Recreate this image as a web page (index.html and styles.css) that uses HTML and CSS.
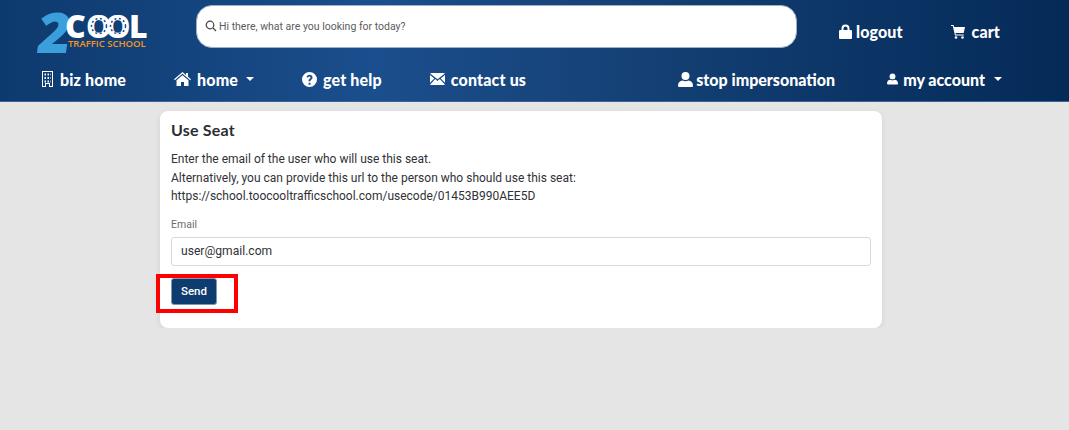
FILE: index.html
```html
<!DOCTYPE html>
<html lang="en">
<head>
    <meta charset="UTF-8">
    <meta name="viewport" content="width=device-width, initial-scale=1.0" />
    <title>Use Seat</title>
    <link rel="stylesheet" href="styles.css">
</head>
<body>
  <header class="header">
    <div class="top-row">
      <a class="logo" href="#">
        <svg width="110" height="42" viewBox="0 0 110 42">
          <text class="logo-two" x="0" y="41" transform="skewX(-8) translate(4 0)">2</text>
          <text class="logo-cool" x="28 49 68 92" y="26">COOL</text>
          <circle class="logo-dots" cx="62" cy="14" r="7.500"/>
          <circle class="logo-dots" cx="81" cy="14" r="7.500"/>
          <text class="logo-school" x="31" y="35">TRAFFIC SCHOOL</text>
        </svg>
      </a>
      <div class="search">
        <svg class="search-icon" width="12" height="12" viewBox="0 0 12 12">
          <circle cx="5" cy="5" r="3.800"/>
          <path d="M8 8 L11 11"/>
        </svg>
        <span>Hi there, what are you looking for today?</span>
      </div>
      <div class="top-links">
        <a class="link logout" href="#">
          <svg width="13" height="15" viewBox="0 0 13 15"><path d="M2.500 6V4.500a4 4 0 0 1 8 0V6H12a1 1 0 0 1 1 1v7a1 1 0 0 1-1 1H1a1 1 0 0 1-1-1V7a1 1 0 0 1 1-1zm2 0h4V4.500a2 2 0 0 0-4 0z"/></svg>
          logout
        </a>
        <a class="link cart" href="#">
          <svg width="14" height="15" viewBox="0 0 14 15"><path d="M0 1h2.600l.5 2H14l-1.300 6H4.500l.3 1.500h8v1H4L1.800 2H0z"/><circle cx="5" cy="13.500" r="1.300"/><circle cx="11.500" cy="13.500" r="1.300"/></svg>
          cart
        </a>
      </div>
    </div>
    <nav class="nav">
      <div class="nav-group nav-left">
        <a class="link" href="#">
          <svg width="13" height="16" viewBox="0 0 13 16"><path fill-rule="evenodd" d="M1 0h11v16H8v-3H5v3H1zm1 1v14h2v-3h5v3h2V1zm1.500 1.500h1.500v2H3.500zm3 0H8v2H6.500zm3 0h.5v2h-.5zm-6 3.500h1.500v2H3.500zm3 0H8v2H6.500zm3 0h.5v2h-.5zm-6 3.500h1.500v2H3.500zm3 0H8v2H6.500zm3 0h.5v2h-.5z"/></svg>
          biz home
        </a>
        <a class="link" href="#">
          <svg width="17" height="14" viewBox="0 0 17 14"><path d="M8.500 0 L12 3V1h2v3.700l3 2.600-.8.900L8.500 1.700 .8 8.200 0 7.300z"/><path d="M8.500 3.200 14.500 8.200V14H10V10H7V14H2.500V8.200z"/></svg>
          home
          <span class="caret"></span>
        </a>
        <a class="link" href="#">
          <svg width="15" height="15" viewBox="0 0 15 15"><path fill-rule="evenodd" d="M7.500 0a7.500 7.500 0 1 1 0 15 7.500 7.500 0 0 1 0-15zM6.600 10.800v2h1.900v-2zM7.500 2.800C5.800 2.800 4.700 3.700 4.500 5.300l1.800.3c.1-.8.500-1.100 1.100-1.100.7 0 1.100.4 1.100.9 0 .5-.3.8-.9 1.300-.8.600-1 1.200-1 2.100v.4h1.900V8.900c0-.5.200-.7.700-1.100.8-.6 1.300-1.300 1.300-2.300 0-1.600-1.200-2.700-3-2.700z"/></svg>
          get help
        </a>
        <a class="link" href="#">
          <svg width="15" height="12" viewBox="0 0 15 12"><path d="M1 0h13a1 1 0 0 1 .8.500L7.500 6.300.2.500A1 1 0 0 1 1 0z"/><path d="M0 2 4.300 5.400 0 9.800zM15 2v7.800l-4.300-4.400zM5.200 6.100l2.300 1.800 2.300-1.800L14.800 11.400a1 1 0 0 1-.8.600H1a1 1 0 0 1-.8-.6z"/></svg>
          contact us
        </a>
      </div>
      <div class="nav-group nav-right">
        <a class="link stop" href="#">
          <svg width="15" height="15" viewBox="0 0 15 15"><circle cx="7.500" cy="4" r="4"/><path d="M0 13.500C0 10.500 2 8.800 4.500 8.500c1.800 1 4.200 1 6 0C13 8.800 15 10.500 15 13.500 15 14.500 14.500 15 13.500 15h-12C.5 15 0 14.500 0 13.500z"/></svg>
          stop impersonation
        </a>
        <a class="link account" href="#">
          <svg width="11" height="12" viewBox="0 0 15 15"><circle cx="7.500" cy="4" r="4"/><path d="M0 13.500C0 10.500 2 8.800 4.500 8.500c1.800 1 4.200 1 6 0C13 8.800 15 10.500 15 13.500 15 14.500 14.500 15 13.500 15h-12C.5 15 0 14.500 0 13.500z"/></svg>
          my account
          <span class="caret"></span>
        </a>
      </div>
    </nav>
  </header>

  <main class="card">
    <h1>Use Seat</h1>
    <p>Enter the email of the user who will use this seat.<br>
    Alternatively, you can provide this url to the person who should use this seat:<br>
    https://school.toocooltrafficschool.com/usecode/01453B990AEE5D</p>
    <label for="email">Email</label>
    <input type="text" id="email" name="email" value="user@gmail.com">
    <div class="send-wrap">
      <button type="submit">Send</button>
      <div class="highlight"></div>
    </div>
  </main>
</body>
</html>
```

FILE: styles.css
```css
body {
  margin: 0;
  font-family: Roboto, Arial, sans-serif;
  background-color: #e5e5e5;
}
a {
  text-decoration: none;
  color: #fff;
}
.header {
  height: 102px;
  box-sizing: border-box;
  background: linear-gradient(90deg, #0d3a6e 0%, #1b4e8d 35%, #164379 55%, #042a57 100%);
  border-bottom: 1px solid #3a6292;
}
.top-row {
  display: flex;
  align-items: flex-start;
  height: 54px;
}
.logo {
  display: block;
  width: 159px;
  height: 42px;
  margin: 12px 0 0 37px;
}
.logo svg {
  display: block;
  overflow: visible;
}
.logo-two {
  font-family: "Open Sans", sans-serif;
  font-size: 56px;
  font-weight: 800;
  fill: #3b9fdc;
}
.logo-cool {
  font-family: "Open Sans", sans-serif;
  font-size: 32px;
  font-weight: 800;
  fill: #fff;
}
.logo-dots {
  fill: none;
  stroke: #1b4e8d;
  stroke-width: 1.500;
  stroke-dasharray: 2 2.500;
}
.logo-school {
  font-family: "Open Sans", sans-serif;
  font-size: 9.500px;
  font-weight: 600;
  fill: #f7941d;
}
.search {
  display: flex;
  align-items: center;
  gap: 2px;
  width: 601px;
  height: 43px;
  box-sizing: border-box;
  margin-top: 5px;
  padding: 0 0 1px 8px;
  border: 1px solid #9fb0c6;
  border-radius: 16px;
  background-color: #fff;
  font-size: 10.500px;
  color: #5c5c5c;
}
.search-icon {
  fill: none;
  stroke: #444;
  stroke-width: 1.200;
}
.top-links {
  display: flex;
  margin: 22px 0 0 42px;
  letter-spacing: 0.100px;
}
.link {
  display: flex;
  align-items: center;
  gap: 6px;
  font-family: Lato, Arial, sans-serif;
  font-size: 16px;
  font-weight: 900;
  white-space: nowrap;
  color: #fff;
}
.link svg {
  fill: #fff;
  flex: none;
}
.logout {
  gap: 4px;
}
.cart {
  margin-left: 48px;
  gap: 7px;
}
.stop {
  gap: 3px;
}
.account {
  gap: 5px;
}
.nav {
  display: flex;
  justify-content: space-between;
  align-items: center;
  height: 50px;
  padding: 0 67px 0 41px;
}
.nav-group {
  display: flex;
  align-items: center;
  gap: 48px;
}
.nav-left {
  letter-spacing: 0.150px;
}
.nav-right {
  gap: 52px;
}
.caret {
  width: 0;
  height: 0;
  margin-left: 2px;
  border-top: 4px solid #fff;
  border-left: 4px solid transparent;
  border-right: 4px solid transparent;
}
.account .caret {
  margin-left: 4px;
}
.card {
  width: 722px;
  height: 217px;
  box-sizing: border-box;
  margin: 9px 0 0 160px;
  padding: 10px 11px;
  border-radius: 8px;
  background-color: #fff;
  box-shadow: 0 2px 6px rgba(0, 0, 0, 0.08);
}
h1 {
  margin: 0 0 11px;
  font-family: Lato, Arial, sans-serif;
  font-size: 16px;
  font-weight: 700;
  line-height: 18px;
  letter-spacing: 0.200px;
  color: #2b2d33;
}
p {
  margin: 0 0 12px;
  font-size: 12px;
  line-height: 18.500px;
  color: #303237;
}
label {
  display: block;
  margin-bottom: 5px;
  font-size: 10.500px;
  line-height: 14px;
  color: #6b6d72;
}
input {
  display: block;
  width: 100%;
  height: 29px;
  box-sizing: border-box;
  padding: 0 9px;
  border: 1px solid #d8d9de;
  border-radius: 3px;
  font-family: Roboto, Arial, sans-serif;
  font-size: 12.100px;
  color: #303237;
}
.send-wrap {
  position: relative;
  margin-top: 12px;
}
button {
  display: block;
  width: 46px;
  height: 27px;
  padding: 0;
  border: 1px solid #7f97b3;
  border-radius: 3px;
  font-family: Roboto, Arial, sans-serif;
  font-size: 11.500px;
  font-weight: 500;
  color: #fff;
  background-color: #0f3c6e;
}
.highlight {
  position: absolute;
  left: -15px;
  top: -4px;
  width: 82px;
  height: 39px;
  box-sizing: border-box;
  border: 4px solid #f00;
}
```
